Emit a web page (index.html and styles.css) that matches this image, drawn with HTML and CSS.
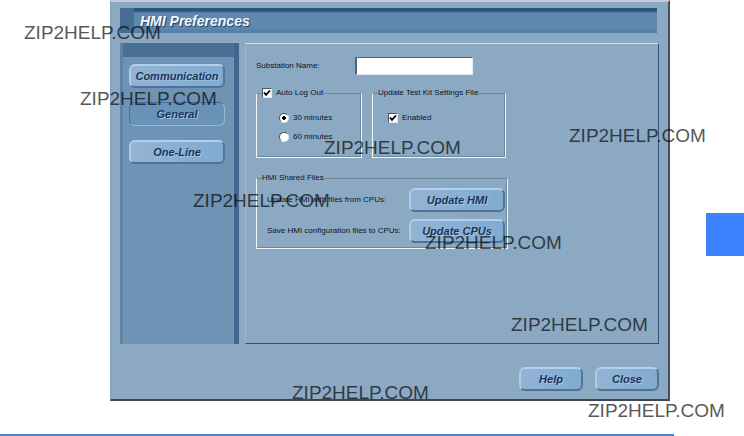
FILE: index.html
```html
<!DOCTYPE html>
<html lang="en">
<head>
    <meta charset="UTF-8">
    <meta name="viewport" content="width=device-width, initial-scale=1.0">
    <title>HMI Preferences</title>
    <link rel="stylesheet" href="styles.css">
</head>
<body>
    <main class="page">
        <div class="dialog">
            <h1 class="titleBar">HMI Preferences</h1>

            <div class="content">
                <nav class="sidebar">
                    <div class="sidebarTop"></div>
                    <button class="btn first" type="button">Communication</button>
                    <button class="btn active" type="button">General</button>
                    <button class="btn" type="button">One-Line</button>
                </nav>

                <form class="panel">
                    <div class="nameRow">
                        <label for="substation">Substation Name:</label>
                        <input type="text" id="substation">
                    </div>

                    <div class="groups">
                        <fieldset class="logout">
                            <legend><label><input type="checkbox" checked> Auto Log Out</label></legend>
                            <label class="option"><input type="radio" name="logout" checked> 30 minutes</label>
                            <label class="option"><input type="radio" name="logout"> 60 minutes</label>
                        </fieldset>
                        <fieldset class="testKit">
                            <legend>Update Test Kit Settings File</legend>
                            <label class="option"><input type="checkbox" checked> Enabled</label>
                        </fieldset>
                    </div>

                    <fieldset class="shared">
                        <legend>HMI Shared Files</legend>
                        <div class="sharedRow">
                            <span>Update HMI with files from CPUs:</span>
                            <button class="btn" type="button">Update HMI</button>
                        </div>
                        <div class="sharedRow">
                            <span>Save HMI configuration files to CPUs:</span>
                            <button class="btn" type="button">Update CPUs</button>
                        </div>
                    </fieldset>
                </form>
            </div>

            <div class="footer">
                <button class="btn" type="button">Help</button>
                <button class="btn" type="button">Close</button>
            </div>
        </div>
        <div class="rule"></div>
    </main>

    <div class="pageTab"></div>

    <!-- watermarks -->
    <span class="mark m1">ZIP2HELP.COM</span>
    <span class="mark m2">ZIP2HELP.COM</span>
    <span class="mark m3">ZIP2HELP.COM</span>
    <span class="mark m4">ZIP2HELP.COM</span>
    <span class="mark m5">ZIP2HELP.COM</span>
    <span class="mark m6">ZIP2HELP.COM</span>
    <span class="mark m7">ZIP2HELP.COM</span>
    <span class="mark m8">ZIP2HELP.COM</span>
    <span class="mark m9">ZIP2HELP.COM</span>
</body>
</html>
```
FILE: styles.css
```css
* {
    margin: 0;
    padding: 0;
    box-sizing: border-box;
}
body {
    font-family: "Liberation Sans", Arial, sans-serif;
    font-size: 8px;
    line-height: 12px;
    color: #0b1424;
    background: #fff;
    position: relative;
}
.page {
    display: flex;
    flex-direction: column;
    min-height: 100vh;
}
.dialog {
    flex: 1;
    display: flex;
    flex-direction: column;
    margin: 0 74px 33px 110px;
    padding: 6px 9px 8px;
    background: #8ca9c4;
    border: 1px solid #7e9fbb;
    border-top: 2px solid #c9cbd8;
    border-right: 2px solid #454e5c;
    border-bottom: 2px solid #3f4652;
}
.titleBar {
    height: 25px;
    margin-right: 2px;
    padding-left: 20px;
    font-size: 14px;
    font-style: italic;
    line-height: 26px;
    color: #f4f8fc;
    text-shadow: 1px 1px 1px #1f3f63;
    background: linear-gradient(90deg, #456c93 0 14px, transparent 14px), linear-gradient(#31557a 0 3px, #5f88af 5px, #6189b0 19px, #4f7ea6);
}
.content {
    flex: 1;
    display: flex;
    gap: 6px;
    margin-top: 10px;
}
.sidebar {
    width: 119px;
    display: flex;
    flex-direction: column;
    align-items: flex-start;
    gap: 14px;
    background: #6e93b5;
    border-left: 3px solid #5c84a9;
    border-right: 5px solid #43658f;
}
.sidebarTop {
    align-self: stretch;
    height: 14px;
    background: #4a7095;
}
.btn {
    flex: none;
    width: 96px;
    height: 24px;
    font-family: "Liberation Sans", Arial, sans-serif;
    font-size: 11px;
    font-weight: bold;
    font-style: italic;
    color: #17365c;
    text-shadow: 1px 1px 0 #a5c3df;
    background: linear-gradient(90deg, #92b3d4, #81abd0);
    border: 2px solid;
    border-color: #b0d0eb #4f779e #4b739b #aecbe6;
    border-radius: 6px;
}
.sidebar .btn {
    margin-left: 6px;
}
.first {
    margin-top: -7px;
}
.active {
    background: #6a92b7;
    border-width: 1px;
    border-color: #476f97 #98b9d5 #98b9d5 #476f97;
}
.panel {
    flex: 1;
    padding: 13px 10px;
    border: 1px solid #2e527c;
    border-top-color: #cfe0ee;
    border-left-color: #9db9d1;
}
.nameRow {
    display: flex;
    align-items: center;
}
.nameRow label {
    width: 99px;
}
.nameRow input {
    width: 118px;
    height: 18px;
    background: #fff;
    border: 1px solid #e4edf5;
    border-top-color: #566574;
    border-left: 2px solid #566574;
}
fieldset {
    border: 1px solid #f0f5f8;
    border-top-color: #6f8796;
    box-shadow: inset -1px 0 #6f8796, inset 0 -1px #6f8796;
    min-width: 0;
}
legend {
    margin-left: 5px;
    height: 12px;
}
label {
    display: flex;
    align-items: center;
}
.groups {
    display: flex;
    gap: 10px;
    margin-top: 12px;
}
.groups fieldset {
    height: 71px;
    padding-top: 6px;
}
.logout {
    width: 106px;
}
.testKit {
    width: 134px;
}
.option {
    height: 12px;
    margin-top: 7px;
    margin-left: 22px;
}
.testKit .option {
    margin-left: 15px;
}
input[type="checkbox"],
input[type="radio"] {
    appearance: none;
    width: 10px;
    height: 10px;
    margin-right: 4px;
    background-color: #fff;
    border: 1px solid;
    border-color: #4a5560 #dfe7ee #dfe7ee #4a5560;
}
input[type="checkbox"]:checked {
    background-image: url("data:image/svg+xml,%3Csvg xmlns='http://www.w3.org/2000/svg' viewBox='0 0 8 8'%3E%3Cpath d='M1 3.5L3 5.8L7 1.5' fill='none' stroke='%23000' stroke-width='1.8'/%3E%3C/svg%3E");
}
input[type="radio"] {
    border-radius: 50%;
}
input[type="radio"]:checked {
    background-image: radial-gradient(circle, #000 0 2px, transparent 2px);
}
.shared {
    width: 252px;
    margin-top: 14px;
    padding: 4px 2px 5px 10px;
}
.shared legend {
    margin-left: -5px;
}
.sharedRow {
    display: flex;
    align-items: center;
    justify-content: space-between;
    white-space: nowrap;
}
.sharedRow + .sharedRow {
    margin-top: 7px;
}
.footer {
    display: flex;
    justify-content: flex-end;
    gap: 12px;
    margin-top: 23px;
}
.footer .btn {
    width: 64px;
}
.rule {
    height: 2px;
    margin-right: 70px;
    background: #4a80e0;
}
.pageTab {
    position: absolute;
    top: 213px;
    right: 0;
    width: 38px;
    height: 43px;
    background: #3d82ff;
}
.mark {
    position: absolute;
    font-size: 19px;
    line-height: 24px;
    color: #000;
    opacity: 0.66;
    pointer-events: none;
}
.m1 { left: 24px; top: 21px; }
.m2 { left: 80px; top: 87px; }
.m3 { left: 569px; top: 124px; }
.m4 { left: 324px; top: 136px; }
.m5 { left: 193px; top: 189px; }
.m6 { left: 425px; top: 231px; }
.m7 { left: 511px; top: 313px; }
.m8 { left: 292px; top: 381px; }
.m9 { left: 588px; top: 399px; }
```
